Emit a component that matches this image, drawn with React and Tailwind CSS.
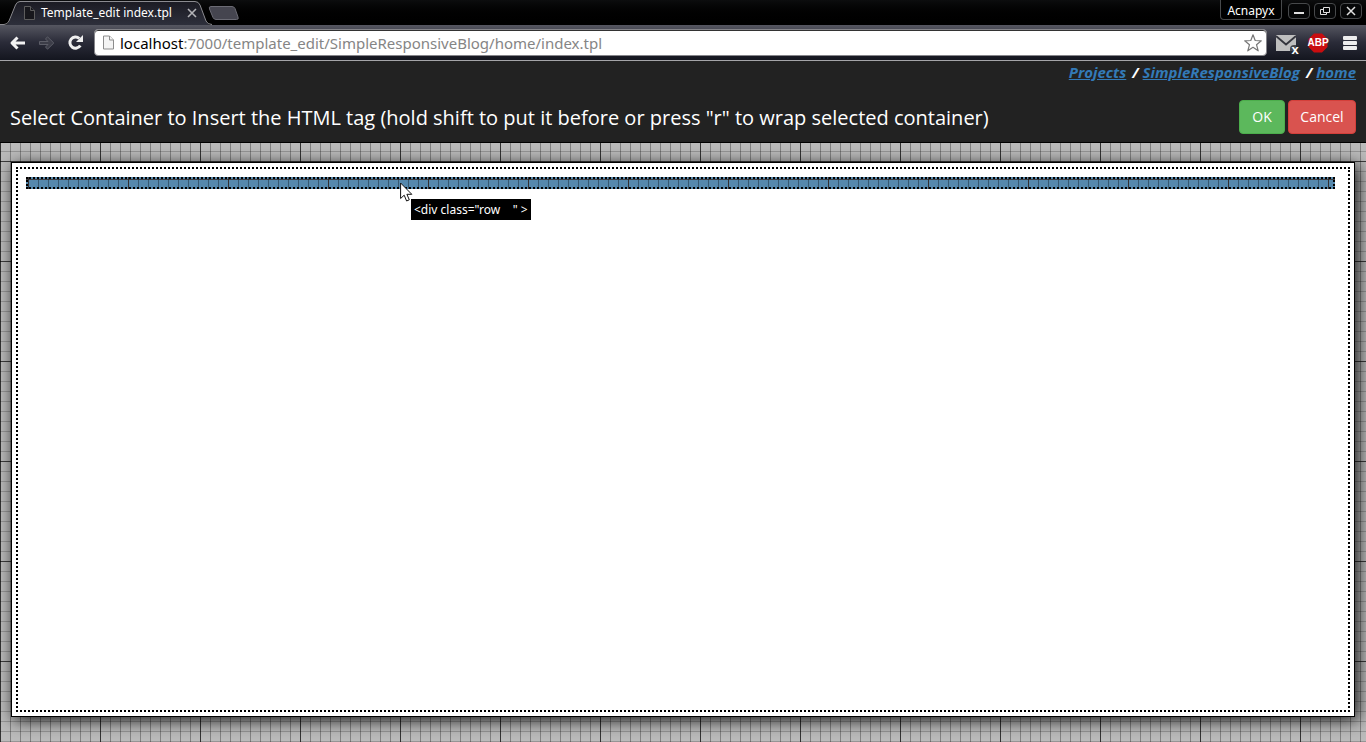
const ADDRESS = { host: 'localhost', rest: ':7000/template_edit/SimpleResponsiveBlog/home/index.tpl' }

function PageIcon({ className, fill, stroke }) {
  return (
    <svg viewBox="0 0 12 14" className={className} fill={fill} stroke={stroke} aria-hidden="true">
      <path d="M1.500 .5H7.500L11.500 4.500V13.500H1.500Z" />
      <path d="M7.500 .5V4.500H11.500" />
    </svg>
  )
}

function TabStrip() {
  return (
    <div className="flex h-[25px] items-start bg-gradient-to-b from-[#0c0d0e] to-black">
      <div className="relative flex h-[25px] w-[212px] items-center pl-[23px] pr-[14px]">
        <svg viewBox="0 0 212 25" className="absolute inset-0 h-[25px] w-[212px]" aria-hidden="true">
          <defs>
            <linearGradient id="tab" x1="0" x2="0" y1="0" y2="1">
              <stop offset="0" stopColor="#1b1b23" />
              <stop offset="1" stopColor="#2e303c" />
            </linearGradient>
          </defs>
          <path
            d="M0 25.500H5Q8 25 9.500 21L15.500 5Q17 1.500 20 1.500H195Q198.500 1.500 200 5L206 21Q207.500 25 211 25.500Z"
            fill="url(#tab)"
          />
          <path
            d="M0 24.500H4Q7.500 24.500 9 21L15.500 5Q17 1.500 20 1.500H195Q198.500 1.500 200 5L206 21Q207.500 24.500 212 24.500"
            fill="none"
            stroke="#8b8b90"
          />
        </svg>
        <PageIcon className="relative mr-[6px] h-[14px] w-3 shrink-0" fill="#17171c" stroke="#5d5d5d" />
        <span className="relative flex-1 whitespace-nowrap text-xs text-white">Template_edit index.tpl</span>
        <button type="button" aria-label="Close tab" className="relative flex size-3 items-center justify-center">
          <svg viewBox="0 0 10 10" className="size-[10px]" stroke="#b4b4b8" strokeWidth="1.6" aria-hidden="true">
            <path d="M1 1L9 9M9 1L1 9" />
          </svg>
        </button>
      </div>
      <button type="button" aria-label="New tab" className="-ml-1 mt-[6px]">
        <svg viewBox="0 0 31 14" className="h-[14px] w-[31px]" aria-hidden="true">
          <path
            d="M3 .5H24Q26 .5 27 2.500L30 11Q31 13.500 28.500 13.500H8Q6 13.500 5 11.500L1.500 3Q.5 .5 3 .5Z"
            fill="#45454f"
            stroke="#6b6b74"
          />
        </svg>
      </button>
      <div className="ml-auto flex items-start gap-1 pr-1">
        <button
          type="button"
          className="mr-[2px] h-5 w-[62px] rounded-b border border-t-0 border-[#47494b] bg-black pt-px text-xs leading-5 text-white"
        >
          Acnapyx
        </button>
        <WindowButton label="Minimize">
          <path d="M6 10H16" strokeWidth="2" />
        </WindowButton>
        <WindowButton label="Restore">
          <path d="M9.500 4.500H15.500V9.500H9.500ZM9 6.500H6.500V11.500H12.500V10" />
        </WindowButton>
        <WindowButton label="Close">
          <path d="M7 4L15 12M15 4L7 12" strokeWidth="1.500" />
        </WindowButton>
      </div>
    </div>
  )
}

function WindowButton({ label, children }) {
  return (
    <button
      type="button"
      aria-label={label}
      className="mt-[3px] h-4 w-[22px] rounded-sm border border-[#47494b] bg-[#060708]"
    >
      <svg viewBox="1 1 20 14" className="h-[14px] w-5" fill="none" stroke="#e0e0e0" aria-hidden="true">
        {children}
      </svg>
    </button>
  )
}

function Toolbar() {
  return (
    <div className="flex h-9 items-center border-b border-[#a5a5a8] bg-gradient-to-b from-[#565761] via-[#2a2b38] to-[#14161f] pl-[9px] pr-[9px]">
      <button type="button" aria-label="Back" className="mr-3">
        <svg viewBox="0 0 17 14" className="h-[14px] w-[17px]" fill="none" stroke="#f2f2f2" strokeWidth="3" strokeLinejoin="round" aria-hidden="true">
          <path d="M16 7H3M8.500 1.500L3 7L8.500 12.500" />
        </svg>
      </button>
      <button type="button" aria-label="Forward" className="mr-3">
        <svg viewBox="0 0 17 14" className="h-[14px] w-[17px]" fill="#3c3d48" stroke="#5d5e68" strokeLinejoin="round" aria-hidden="true">
          <path d="M1.500 5.500H10L7.500 3L9.500 .8L15.800 7L9.500 13.200L7.500 11L10 8.500H1.500Z" />
        </svg>
      </button>
      <button type="button" aria-label="Reload" className="mr-[10px]">
        <svg viewBox="0 0 17 17" className="size-[17px]" fill="none" stroke="#efefef" aria-hidden="true">
          <path d="M13.300 11.500A5.600 5.600 0 1 1 12.300 4.500" strokeWidth="3" />
          <path d="M16 1V8H9Z" fill="#efefef" stroke="none" />
        </svg>
      </button>
      <div className="flex h-[27px] min-w-0 flex-1 items-center rounded-sm border border-[#85858a] bg-white pl-[7px] pr-1 shadow-[inset_0_1px_0_#333]">
        <PageIcon className="mr-[6px] h-[15px] w-3 shrink-0" fill="#f4f4f4" stroke="#8c8c8c" />
        <a href="#address" className="min-w-0 flex-1 truncate text-[15px] leading-6 text-[#858585]">
          <span className="text-black">{ADDRESS.host}</span>
          {ADDRESS.rest}
        </a>
        <button type="button" aria-label="Bookmark this page">
          <svg viewBox="0 0 18 18" className="size-[18px]" fill="#fff" stroke="#777" strokeWidth="1.200" strokeLinejoin="round" aria-hidden="true">
            <path d="M9 .8L11.200 6.500L17.300 6.800L12.500 10.700L14.200 16.800L9 13.300L3.800 16.800L5.500 10.700L.7 6.800L6.800 6.500Z" />
          </svg>
        </button>
      </div>
      <button type="button" aria-label="Mail" className="relative ml-[9px] mr-3">
        <svg viewBox="0 0 20 16" className="h-4 w-5" aria-hidden="true">
          <path d="M0 0H20V16H0Z" fill="#bfbfbf" />
          <path d="M0 1L10 9.500L20 1" fill="none" stroke="#34353d" strokeWidth="1.800" />
        </svg>
        <span className="absolute -bottom-1 -right-1 h-[10px] w-[10px] rounded-sm bg-[#292a30]/80 text-center font-['Liberation_Sans_Narrow','Liberation_Sans',sans-serif] text-[13px] font-bold leading-[9px] text-white">
          x
        </span>
      </button>
      <button type="button" aria-label="Adblock Plus" className="relative mr-[15px] size-5">
        <svg viewBox="0 0 20 20" className="size-5" aria-hidden="true">
          <path d="M6 .5H14L19.500 6V14L14 19.500H6L.5 14V6Z" fill="#c90d0f" />
        </svg>
        <span className="absolute inset-0 flex items-center justify-center font-['Liberation_Sans_Narrow','Liberation_Sans',sans-serif] text-[10px] font-bold leading-5 text-white">
          ABP
        </span>
      </button>
      <button type="button" aria-label="Menu">
        <svg viewBox="0 0 14 14" className="size-[14px]" fill="#ededed" aria-hidden="true">
          <rect width="14" height="4" rx="1" />
          <rect y="5" width="14" height="4" rx="1" />
          <rect y="10" width="14" height="4" rx="1" />
        </svg>
      </button>
    </div>
  )
}

function Crumb({ href, children }) {
  return (
    <span className="flex gap-1">
      /
      <a href={href} className="text-[#337ab7] underline">{children}</a>
    </span>
  )
}

function EditorHeader() {
  return (
    <header className="border-b border-black bg-[#222] px-[10px] font-['Open_Sans','Noto_Sans',sans-serif]">
      <nav className="flex h-[39px] items-start justify-end gap-[6px] text-[15px] font-bold italic leading-[22px] text-white">
        <a href="#projects" className="text-[#337ab7] underline">Projects</a>
        <Crumb href="#blog">SimpleResponsiveBlog</Crumb>
        <Crumb href="#home">home</Crumb>
      </nav>
      <div className="flex h-[42px] items-start justify-between">
        <h1 className="whitespace-nowrap text-xl leading-9 text-white">
          Select Container to Insert the HTML tag (hold shift to put it before or press "r" to wrap selected container)
        </h1>
        <div className="flex gap-[3px] text-sm text-white">
          <button type="button" className="h-[34px] w-[46px] rounded border border-[#4cae4c] bg-[#5cb85c]">OK</button>
          <button type="button" className="h-[34px] w-[68px] rounded border border-[#d43f3a] bg-[#d9534f]">Cancel</button>
        </div>
      </div>
    </header>
  )
}

function Workspace() {
  return (
    <main className="flex flex-1 flex-col bg-[#bbb] bg-[linear-gradient(to_right,rgba(0,0,0,.6)_1px,transparent_1px),linear-gradient(to_bottom,rgba(0,0,0,.6)_1px,transparent_1px),linear-gradient(to_right,rgba(0,0,0,.3)_1px,transparent_1px),linear-gradient(to_bottom,rgba(0,0,0,.2)_1px,transparent_1px)] bg-[position:0_18px] bg-[size:100px_100px,100px_100px,10px_10px,10px_10px] px-[11px] pb-[25px] pt-[19px]">
      <section className="flex flex-1 flex-col border border-black bg-white p-1 shadow-[3px_3px_16px_rgba(0,0,0,0.9)]">
        <div className="flex-1 border-2 border-dotted border-black py-2 pl-2 pr-[13px]">
          <div className="relative h-3 border-2 border-dotted border-black bg-[#5588ad] bg-[linear-gradient(to_right,rgba(50,30,20,.7)_1px,transparent_1px),linear-gradient(to_bottom,rgba(50,30,20,.7)_1px,transparent_1px),linear-gradient(to_right,rgba(0,0,0,.35)_1px,transparent_1px)] bg-[size:100px_100px,100px_100px,10px_10px]">
            <svg viewBox="0 0 13 20" className="absolute left-[372px] top-[3px] h-5 w-[13px]" aria-hidden="true">
              <path d="M.6 1V16.500L4.200 13.200L6.600 19L9.300 17.800L6.900 12.300H11.800Z" fill="#fff" stroke="#111" />
            </svg>
            <div role="tooltip" className="absolute left-[383px] top-5 h-[21px] whitespace-pre bg-black px-[3px] text-xs leading-[21px] text-white">
              {'<div class="row    " >'}
            </div>
          </div>
        </div>
      </section>
    </main>
  )
}

export default function App() {
  return (
    <div className="flex min-h-screen flex-col font-['Noto_Sans','Open_Sans',sans-serif]">
      <TabStrip />
      <Toolbar />
      <EditorHeader />
      <Workspace />
    </div>
  )
}
